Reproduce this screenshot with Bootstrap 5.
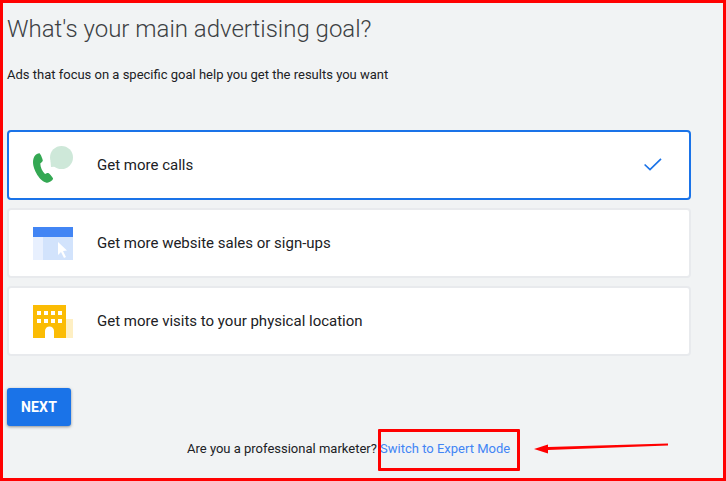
<!DOCTYPE html>
<html lang="en">
<head>
<meta charset="utf-8">
<title>Advertising goal</title>
<link href="https://cdn.jsdelivr.net/npm/bootstrap@5.3.0/dist/css/bootstrap.min.css" rel="stylesheet">
<style>
html,body{height:100%;margin:0}
body{background:#f1f3f4;font-family:Roboto,"Liberation Sans",sans-serif;color:#202124;overflow:hidden}
.shot-frame{position:relative;width:726px;height:481px;border:3px solid #f00;padding:0 32px 0 4px;background:#f1f3f4}
.goal-title{font-size:24px;font-weight:300;line-height:32px;margin:10px 0 0;color:#3c4043}
.goal-sub{font-size:13px;line-height:18px;margin:21px 0 0;color:#202124}
.goal-list{margin-top:46px;gap:8px}
.goal-card{height:70px;background:#fff;border:2px solid #e8eaed;border-radius:4px;padding:0 24px;font-size:15px;color:#202124}
.goal-card.chosen{border-color:#1a73e8}
.goal-icon{width:42px;flex:none;margin-right:22px}
.goal-icon svg{display:block}
.goal-check{margin:0 3px 2px 0}
.next-btn{margin-top:32px;width:64px;height:38px;background:#1a73e8;border:0;border-radius:3px;color:#fff;font-size:14px;font-weight:700;letter-spacing:.2px;box-shadow:0 1px 3px rgba(60,64,67,.55);padding:0}
.expert-line{font-size:13px;line-height:18px;margin-top:14px;padding-left:180px;color:#202124}
.expert-line a{color:#4285f4;text-decoration:none}
.mark-box{position:absolute;left:375px;top:426px;width:142px;height:42px;border:3px solid #f00;border-radius:1px}
.mark-arrow{position:absolute;left:525px;top:436px}
</style>
</head>
<body>
<div class="shot-frame">
  <h1 class="goal-title">What's your main advertising goal?</h1>
  <p class="goal-sub">Ads that focus on a specific goal help you get the results you want</p>
  <div class="goal-list d-flex flex-column">
    <div class="goal-card chosen d-flex align-items-center">
      <div class="goal-icon">
        <svg width="42" height="40" viewBox="0 0 42 40">
          <circle cx="28.500" cy="12.500" r="11.500" fill="#cee8d9"/>
          <path d="M17.500 16l.5 6 6-.5z" fill="#cee8d9"/>
          <path d="M2.500 10C4 9 5.500 8 6.500 8.300 7.500 8.800 9.700 14 9.800 15.500c0 1-1.500 2-2.500 3 0 3.500 2 8 4.700 10.500 1.300-.5 2.300-1.200 3.200-1 1.200.4 4.300 4 4.800 5.200.2 1-.5 1.800-1.500 2.500-1.500 1-3 2.300-5 2C7 36.500 0 25 0 17c0-2.800 1-5.500 2.500-7z" fill="#34a853"/>
        </svg>
      </div>
      <span class="flex-grow-1">Get more calls</span>
      <svg class="goal-check" width="18" height="13" viewBox="0 0 18 13" fill="none"><path d="M.6 6.500L6 11.500 17 .8" stroke="#1a73e8" stroke-width="1.700"/></svg>
    </div>
    <div class="goal-card d-flex align-items-center">
      <div class="goal-icon">
        <svg width="40" height="33" viewBox="0 0 40 33">
          <rect width="40" height="33" fill="#d2e3fc"/>
          <rect y="10" width="10" height="23" fill="#e8f0fe"/>
          <rect width="40" height="10" fill="#4285f4"/>
          <path d="M25 15l0 13 3-3 3 6 2-1-3-6 4-.5z" fill="#fff"/>
        </svg>
      </div>
      <span class="flex-grow-1">Get more website sales or sign-ups</span>
    </div>
    <div class="goal-card d-flex align-items-center">
      <div class="goal-icon">
        <svg width="40" height="33" viewBox="0 0 40 33">
          <rect x="33" y="14" width="7" height="19" fill="#feefc3"/>
          <rect width="33" height="33" fill="#fbbc04"/>
          <g fill="#fff">
            <rect x="4" y="6" width="4" height="4"/><rect x="11" y="6" width="4" height="4"/><rect x="18" y="6" width="4" height="4"/><rect x="25" y="6" width="4" height="4"/>
            <rect x="4" y="14" width="4" height="4"/><rect x="11" y="14" width="4" height="4"/><rect x="18" y="14" width="4" height="4"/><rect x="25" y="14" width="4" height="4"/>
            <path d="M12 33V26a4.500 4.500 0 0 1 9 0v7z"/>
          </g>
        </svg>
      </div>
      <span class="flex-grow-1">Get more visits to your physical location</span>
    </div>
  </div>
  <button type="button" class="next-btn btn d-block">NEXT</button>
  <div class="expert-line">Are you a professional marketer? <a href="#">Switch to Expert Mode</a></div>
  <div class="mark-box"></div>
  <svg class="mark-arrow" width="145" height="18" viewBox="0 0 145 18">
    <path d="M6 10L20 5.500 20 8 140 4.500 140 6.500 20 11 20 14.500z" fill="#f00"/>
  </svg>
</div>
</body>
</html>
